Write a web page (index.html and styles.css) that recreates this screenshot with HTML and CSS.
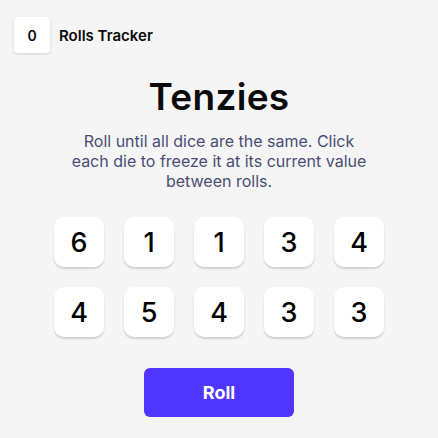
FILE: index.html
```html
<!DOCTYPE html>
<html>
<head>
<meta charset="utf-8">
<link rel="stylesheet" href="styles.css">
</head>
<body>
<header class="tracker">
  <div class="count">0</div>
  <span class="tracker-label">Rolls Tracker</span>
</header>
<main class="game">
  <h1 class="title">Tenzies</h1>
  <p class="instructions">Roll until all dice are the same. Click each die to freeze it at its current value between rolls.</p>
  <div class="dice">
    <button class="die">6</button>
    <button class="die">1</button>
    <button class="die">1</button>
    <button class="die">3</button>
    <button class="die">4</button>
    <button class="die">4</button>
    <button class="die">5</button>
    <button class="die">4</button>
    <button class="die">3</button>
    <button class="die">3</button>
  </div>
  <button class="roll">Roll</button>
</main>
</body>
</html>
```
FILE: styles.css
```css
* { box-sizing: border-box; }
html, body { margin: 0; padding: 0; }
body {
  width: 438px;
  height: 438px;
  background: #f5f5f5;
  font-family: Inter, "Noto Sans", sans-serif;
  color: #0b0b0b;
  overflow: hidden;
}
.tracker {
  display: flex;
  align-items: center;
  gap: 9px;
  padding: 17px 14px 0;
}
.count {
  width: 36px;
  height: 36px;
  background: #fff;
  border-radius: 3px;
  box-shadow: 0 1px 3px rgba(0,0,0,0.15);
  display: flex;
  align-items: center;
  justify-content: center;
  font-size: 14px;
  font-weight: 600;
}
.tracker-label {
  font-size: 15px;
  font-weight: 600;
}
.game {
  display: flex;
  flex-direction: column;
  align-items: center;
}
.title {
  margin: 22px 0 0;
  font-size: 37px;
  font-weight: 600;
  line-height: 44px;
  letter-spacing: 0.3px;
}
.instructions {
  margin: 12px 0 0;
  width: 302px;
  text-align: center;
  font-size: 16px;
  line-height: 20px;
  color: #4a4e74;
}
.dice {
  margin-top: 26px;
  display: grid;
  grid-template-columns: repeat(5, 50px);
  gap: 20px;
}
.die {
  width: 50px;
  height: 50px;
  border: none;
  background: #fff;
  border-radius: 10px;
  box-shadow: 0 2px 2px rgba(0,0,0,0.15);
  font-family: Inter, "Noto Sans", sans-serif;
  font-size: 27px;
  font-weight: 500;
  color: #000;
  padding: 0;
}
.roll {
  margin-top: 31px;
  width: 150px;
  height: 49px;
  border: none;
  border-radius: 6px;
  background: #5035ff;
  color: #fff;
  font-family: Inter, "Noto Sans", sans-serif;
  font-size: 18px;
  font-weight: 700;
}
```
